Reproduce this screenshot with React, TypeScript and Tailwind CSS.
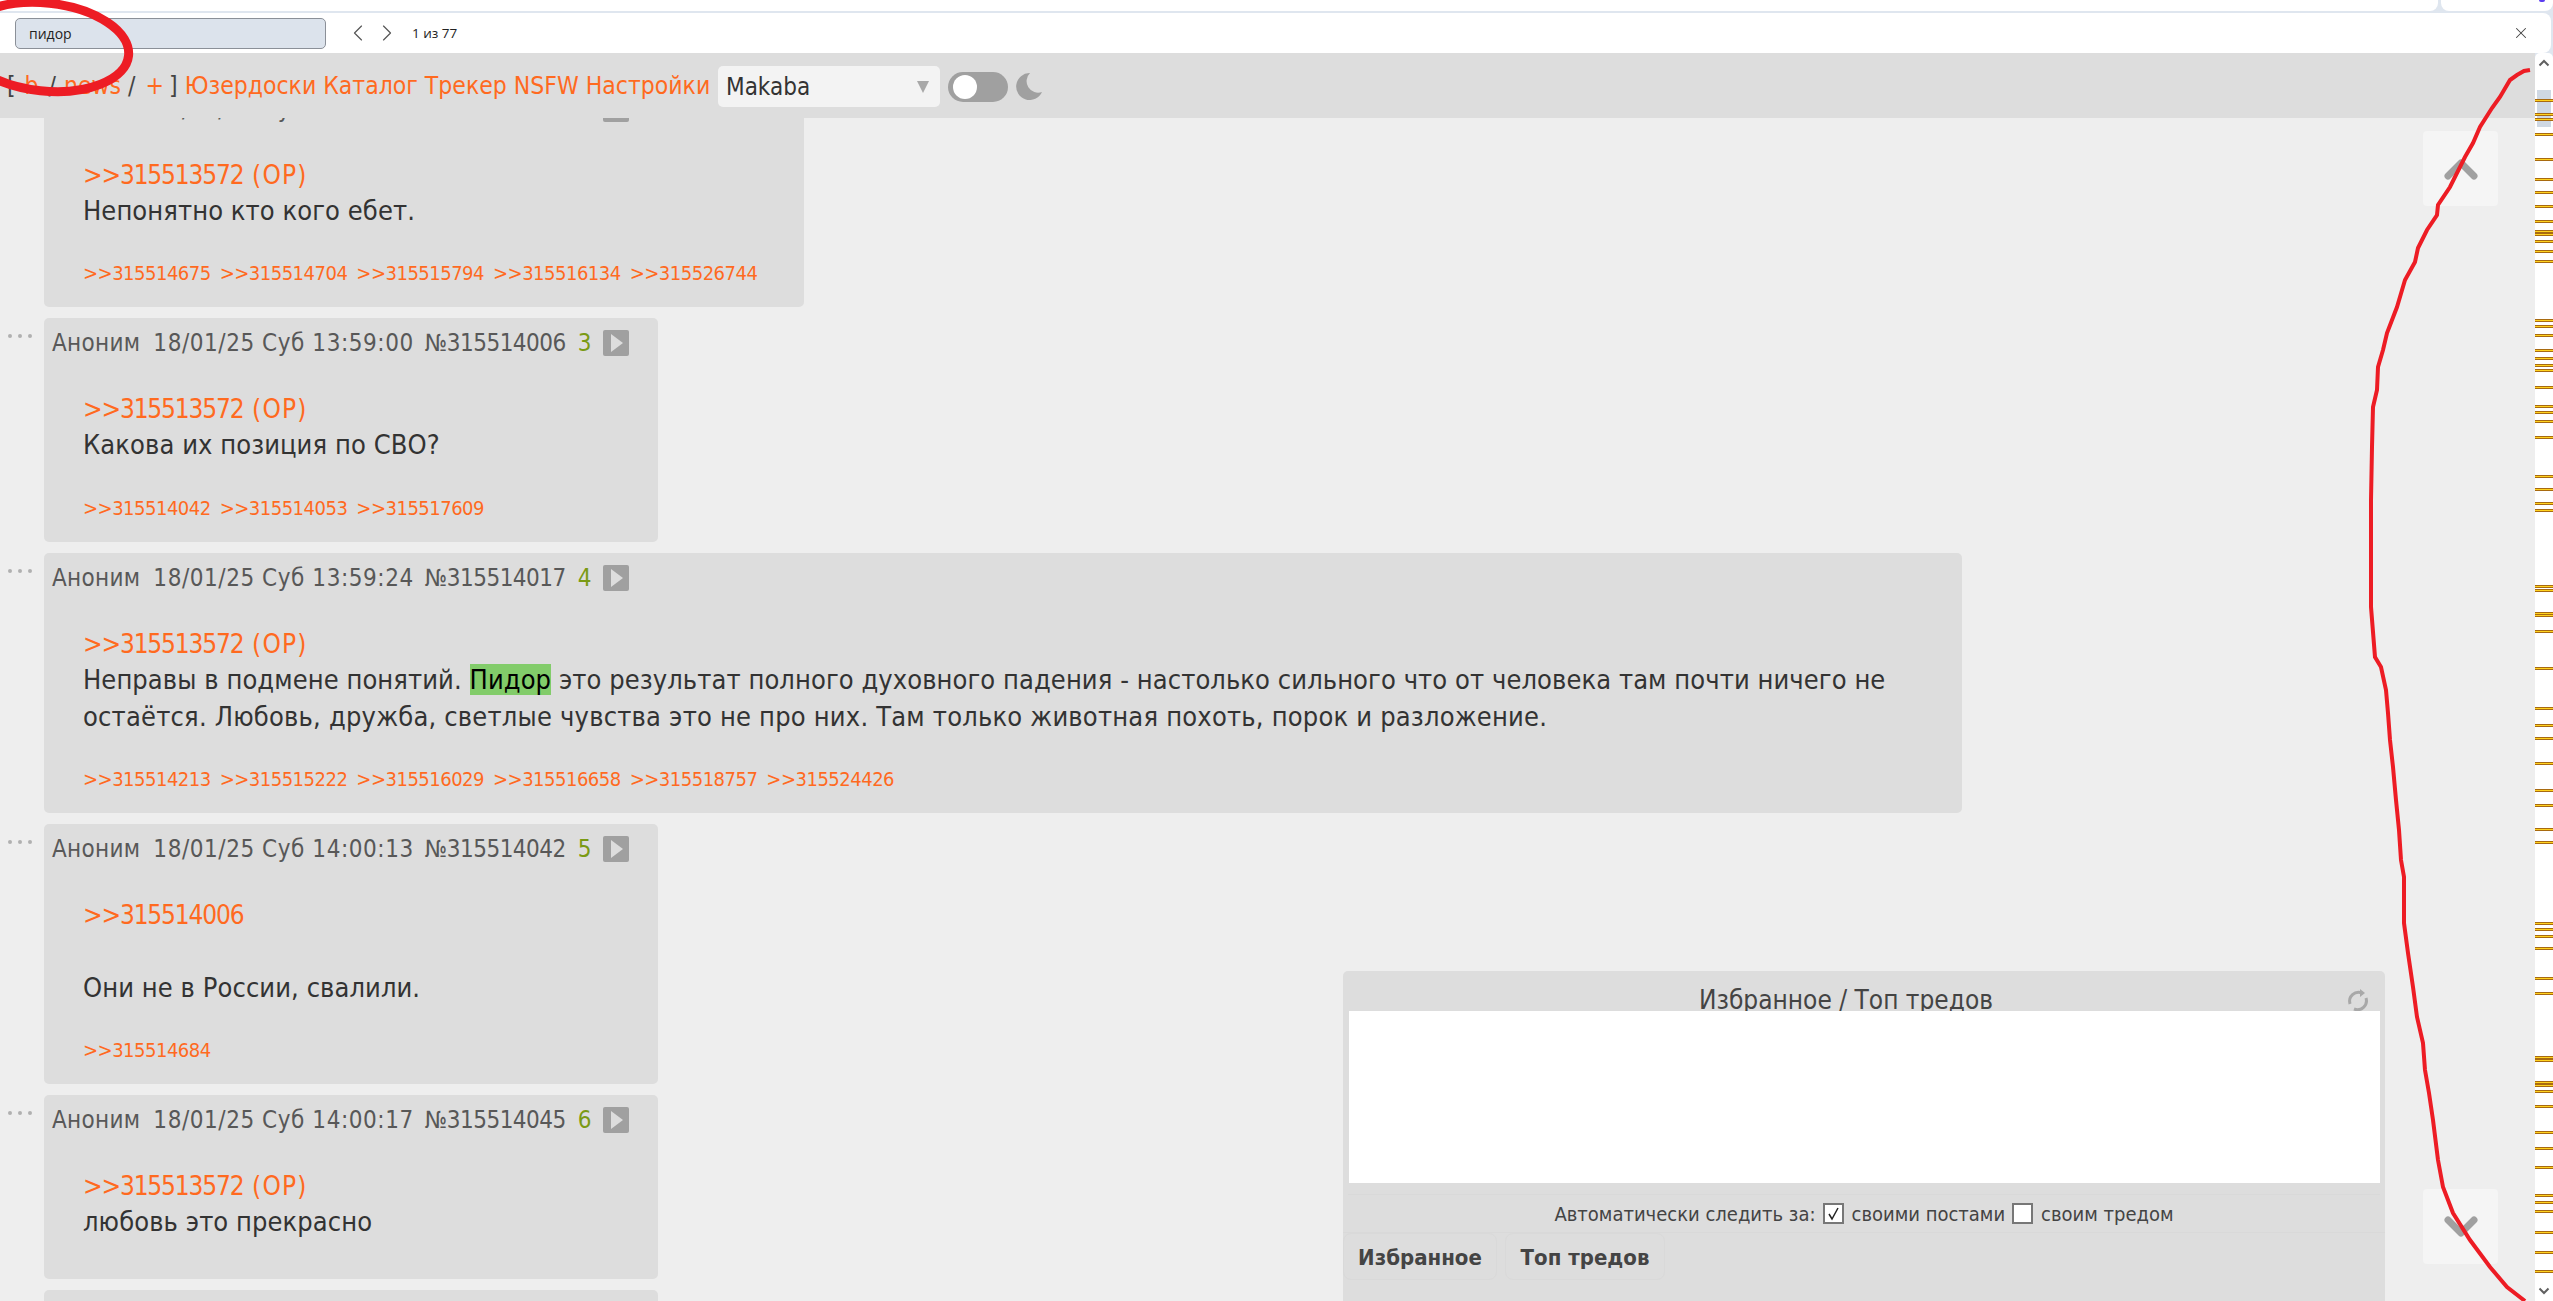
import { ChevronLeft, ChevronRight, X } from 'lucide-react';

const bodyFont = "font-['DejaVu_Sans_Condensed','DejaVu_Sans',sans-serif]";

type Post = {
  id: string;
  time: string;
  num: number;
  width: string;
  height: string;
  quote: string;
  op?: boolean;
  lines: React.ReactNode[];
  refs: string[];
  gap?: boolean;
};

const posts: Post[] = [
  {
    id: '315513999',
    time: '13:58:41',
    num: 2,
    width: 'w-[760px]',
    height: 'h-[223px]',
    quote: '>>315513572',
    op: true,
    lines: ['Непонятно кто кого ебет.'],
    refs: ['315514675', '315514704', '315515794', '315516134', '315526744'],
  },
  {
    id: '315514006',
    time: '13:59:00',
    num: 3,
    width: 'w-[614px]',
    height: 'h-[224px]',
    quote: '>>315513572',
    op: true,
    lines: ['Какова их позиция по СВО?'],
    refs: ['315514042', '315514053', '315517609'],
  },
  {
    id: '315514017',
    time: '13:59:24',
    num: 4,
    width: 'w-[1918px]',
    height: 'h-[260px]',
    quote: '>>315513572',
    op: true,
    lines: [
      <>
        Неправы в подмене понятий. <span className="bg-[#82cc6a] text-black">Пидор</span> это результат полного духовного падения - настолько сильного что от человека там почти ничего не
      </>,
      <span className="tracking-[0.2px]">
        остаётся. Любовь, дружба, светлые чувства это не про них. Там только животная похоть, порок и разложение.
      </span>,
    ],
    refs: ['315514213', '315515222', '315516029', '315516658', '315518757', '315524426'],
  },
  {
    id: '315514042',
    time: '14:00:13',
    num: 5,
    width: 'w-[614px]',
    height: 'h-[260px]',
    quote: '>>315514006',
    lines: ['Они не в России, свалили.'],
    refs: ['315514684'],
    gap: true,
  },
  {
    id: '315514045',
    time: '14:00:17',
    num: 6,
    width: 'w-[614px]',
    height: 'h-[184px]',
    quote: '>>315513572',
    op: true,
    lines: ['любовь это прекрасно'],
    refs: [],
  },
];

const marks = [
  100, 114, 119, 134, 159, 179, 192, 206, 221, 231, 234, 241, 251, 261, 320, 326, 335, 350, 358, 365, 370, 387, 406,
  412, 421, 437, 476, 489, 503, 510, 586, 590, 613, 615, 631, 668, 708, 725, 738, 763, 790, 805, 829, 842, 923, 929,
  936, 948, 978, 993, 1057, 1060, 1082, 1085, 1091, 1106, 1132, 1148, 1167, 1195, 1202, 1211, 1232, 1252, 1271,
];

const curve =
  'M2530 70 L2524 71 L2517 75 L2510 80 L2500 97 L2492 108 L2480 127 L2473 143 L2465 157 L2450 187 L2438 205 L2437 215 L2427 230 L2418 248 L2415 262 L2405 280 L2397 307 L2387 333 L2383 350 L2378 367 L2377 390 L2373 407 L2372 447 L2371 500 L2371 607 L2375 657 L2381 667 L2386 690 L2388 713 L2390 740 L2393 767 L2396 800 L2399 830 L2401 860 L2404 877 L2404 923 L2408 953 L2413 987 L2417 1017 L2423 1043 L2425 1070 L2429 1093 L2433 1120 L2438 1160 L2443 1187 L2453 1213 L2470 1240 L2490 1267 L2507 1287 L2525 1301';

const PostCard = ({ post }: { post: Post }) => (
  <div className="flex">
    <div className="w-[44px] pt-[16px] pl-[8px] flex gap-[6px]">
      <span className="w-[4px] h-[4px] rounded-full bg-[#b0b0b0]" />
      <span className="w-[4px] h-[4px] rounded-full bg-[#b0b0b0]" />
      <span className="w-[4px] h-[4px] rounded-full bg-[#b0b0b0]" />
    </div>
    <div className={`${post.width} ${post.height} bg-[#dddddd] rounded-[5px] pl-[8px] pt-[11px] flex flex-col`}>
      <div className="flex items-center h-[28px] text-[24px] text-[#585858] whitespace-nowrap">
        <span className="tracking-[0.3px]">Аноним</span>
        <span className="ml-[13px] tracking-[0.55px]">18/01/25 Суб {post.time}</span>
        <span className="ml-[11px] tracking-[-0.5px]">№{post.id}</span>
        <span className="ml-[12px] text-[#7a9a14]">{post.num}</span>
        <span className="ml-[11px] w-[26px] h-[26px] bg-[#a0a0a0] rounded-[2px] flex items-center justify-center">
          <span className="w-0 h-0 border-y-[9px] border-y-transparent border-l-[12px] border-l-[#dddddd] ml-[2px]" />
        </span>
      </div>
      <div className="pl-[31px] pt-[34px] text-[27px] tracking-[0.08px] leading-[37px] whitespace-nowrap">
        <div className="h-[35px] text-[#ff6a1f] text-[26px] tracking-[-1.15px]">
          {post.quote}
          {post.op && <span className="tracking-[1.2px]"> (OP)</span>}
        </div>
        {post.gap && <div className="h-[37px]" />}
        {post.lines.map((line, i) => (
          <div key={i} className="text-[#333333]">
            {line}
          </div>
        ))}
      </div>
      {post.refs.length > 0 && (
        <div className="pl-[31px] mt-auto mb-[21px] text-[20px] tracking-[-0.5px] leading-[26px] text-[#ff6a1f] flex gap-[9px]">
          {post.refs.map((r) => (
            <span key={r}>&gt;&gt;{r}</span>
          ))}
        </div>
      )}
    </div>
  </div>
);

export default function App() {
  return (
    <div className={`relative w-full h-[1301px] overflow-hidden flex flex-col bg-[#dfe6ef] ${bodyFont}`}>
      {/* browser tabs strip */}
      <div className="h-[13px] flex gap-[3px] shrink-0">
        <div className="w-[2438px] h-[11px] bg-white rounded-br-[8px]" />
        <div className="relative flex-1 h-[11px] bg-white rounded-b-[8px] overflow-hidden">
          <span className="absolute right-[8px] -top-[2px] w-[6px] h-[4px] rounded-full bg-[#5b3df0]" />
        </div>
      </div>

      {/* find bar */}
      <div className="h-[40px] mr-[2px] bg-white rounded-r-[8px] flex items-center pl-[15px] pr-[21px] shrink-0 font-['Open_Sans',sans-serif]">
        <div className="w-[311px] h-[31px] bg-[#dce3ec] border border-[#8b9098] rounded-[5px] flex items-center pl-[13px] text-[14px] text-[#222222]">
          пидор
        </div>
        <ChevronLeft className="ml-[18px] text-[#555555]" size={28} strokeWidth={1} />
        <ChevronRight className="ml-[1px] text-[#555555]" size={28} strokeWidth={1} />
        <span className="ml-[11px] text-[13.5px] text-[#222222]">1 из 77</span>
        <X className="ml-auto text-[#444444]" size={18} strokeWidth={1.4} />
      </div>

      <div className="flex-1 flex min-h-0">
        <div className="relative flex-1 flex flex-col min-w-0 bg-[#eeeeee] overflow-hidden">
          {/* board nav */}
          <div className="relative z-10 h-[65px] bg-[#dddddd] flex items-center pt-[2px] pl-[7px] whitespace-nowrap shrink-0">
            <div className="w-[711px] flex items-center text-[24.5px]">
              <span className="text-[#444444]">[</span>
              <span className="ml-[9px] text-[#ff6a1f]">b</span>
              <span className="ml-[10px] text-[#444444]">/</span>
              <span className="ml-[8px] text-[#ff6a1f]">news</span>
              <span className="ml-[7px] text-[#444444]">/</span>
              <span className="ml-[10px] text-[#ff6a1f]">+</span>
              <span className="ml-[5px] text-[#444444]">]</span>
              <span className="ml-[7px] text-[#ff6a1f] flex gap-[7px]">
                <span>Юзердоски</span>
                <span>Каталог</span>
                <span>Трекер</span>
                <span>NSFW</span>
                <span>Настройки</span>
              </span>
            </div>
            <div className="w-[222px] h-[41px] bg-[#f3f3f3] rounded-[5px] flex items-center justify-between pl-[8px] pr-[11px] text-[24px] text-[#333333]">
              Makaba
              <span className="w-0 h-0 border-x-[6px] border-x-transparent border-t-[12px] border-t-[#a8a8a8]" />
            </div>
            <div className="ml-[8px] w-[60px] h-[30px] bg-[#a0a0a0] rounded-full pl-[5px] flex items-center">
              <span className="w-[24px] h-[24px] rounded-full bg-white" />
            </div>
            <svg className="ml-[8px]" width="26" height="27" viewBox="0 0 26 27">
              <path d="M14 0 A13.5 13.5 0 1 0 26 19 A11.5 11.5 0 0 1 14 0 Z" fill="#a0a0a0" />
            </svg>
          </div>

          {/* posts */}
          <div className="flex flex-col gap-[11px] -mt-[34px]">
            {posts.map((post) => (
              <PostCard key={post.id} post={post} />
            ))}
            <div className="ml-[44px] w-[614px] h-[60px] bg-[#dddddd] rounded-[5px]" />
          </div>

          {/* scroll up / down */}
          <div className="absolute left-[2423px] top-[78px] w-[75px] h-[75px] bg-[#f5f5f5] rounded-[4px] flex items-center justify-center">
            <svg width="34" height="24" viewBox="0 0 34 24">
              <path d="M4 19 L17 6 L30 19" fill="none" stroke="#a0a0a0" strokeWidth="7" strokeLinecap="round" strokeLinejoin="round" />
            </svg>
          </div>
          <div className="absolute left-[2423px] top-[1136px] w-[75px] h-[75px] bg-[#f5f5f5] rounded-[4px] flex items-center justify-center">
            <svg width="34" height="24" viewBox="0 0 34 24">
              <path d="M4 5 L17 18 L30 5" fill="none" stroke="#a0a0a0" strokeWidth="7" strokeLinecap="round" strokeLinejoin="round" />
            </svg>
          </div>

          {/* favorites widget */}
          <div className="absolute left-[1343px] top-[918px] w-[1042px] h-[340px] bg-[#dddddd] rounded-t-[5px]">
            <div className="relative h-[40px] text-center text-[26px] leading-[30px] pt-[14px] pr-[36px] text-[#444444] overflow-hidden">
              Избранное / Топ тредов
              <svg className="absolute right-[15px] top-[18px]" width="24" height="24" viewBox="0 0 24 24" fill="none" stroke="#a8a8a8" strokeWidth="3">
                <path d="M4 15 A9 9 0 0 1 16 4" />
                <path d="M20 9 A9 9 0 0 1 8 20" />
                <path d="M14 0 L19 4 L14 8 Z" fill="#a8a8a8" stroke="none" />
              </svg>
            </div>
            <div className="ml-[6px] mr-[5px] h-[172px] bg-white" />
            <div className="mt-[11px] mx-[5px] border-t border-[#d9d9d9] h-[38px] flex items-center justify-center text-[20px] text-[#444444] whitespace-nowrap">
              Автоматически следить за:
              <span className="ml-[7px] w-[21px] h-[21px] border-2 border-[#777777] bg-white flex items-center justify-center">
                <svg width="15" height="15" viewBox="0 0 15 15">
                  <path d="M3 8 L6 13 L12 2" fill="none" stroke="#222222" strokeWidth="1.5" />
                </svg>
              </span>
              <span className="ml-[8px]">своими постами</span>
              <span className="ml-[7px] w-[21px] h-[21px] border-2 border-[#777777] bg-white" />
              <span className="ml-[8px]">своим тредом</span>
            </div>
            <div className="border-t border-[#d9d9d9] flex gap-[8px] text-[22px] font-bold text-[#444444]">
              <div className="w-[154px] h-[47px] border border-[#d9d9d9] rounded-[8px] flex items-center justify-center pt-[2px]">Избранное</div>
              <div className="w-[160px] h-[47px] border border-[#d9d9d9] rounded-[8px] flex items-center justify-center pt-[2px]">Топ тредов</div>
            </div>
          </div>
        </div>

        {/* scrollbar with find marks */}
        <div className="relative w-[18px] shrink-0 bg-white rounded-t-[5px] flex flex-col items-center justify-between py-[6px]">
          <svg width="12" height="8" viewBox="0 0 12 8">
            <path d="M1.5 6.5 L6 2 L10.5 6.5" fill="none" stroke="#606060" strokeWidth="2" />
          </svg>
          <svg width="12" height="8" viewBox="0 0 12 8">
            <path d="M1.5 1.5 L6 6 L10.5 1.5" fill="none" stroke="#606060" strokeWidth="2" />
          </svg>
          <div className="absolute left-[2px] top-[37px] w-[14px] h-[37px] bg-[#cfd8e3]" />
          {marks.map((y) => (
            <div
              key={y}
              className="absolute left-0 w-full h-[3px] bg-[#ffd21e] border-y border-[#a86a10]"
              style={{ top: y - 54 }}
            />
          ))}
        </div>
      </div>

      {/* red marker annotations */}
      <svg className="absolute inset-0 z-20 pointer-events-none" width="2553" height="1301" viewBox="0 0 2553 1301" fill="none" stroke="#ed1c24">
        <ellipse cx="45" cy="47" rx="84" ry="44" transform="rotate(6 45 47)" strokeWidth="9" />
        <path d={curve} strokeWidth="4" />
      </svg>
    </div>
  );
}
